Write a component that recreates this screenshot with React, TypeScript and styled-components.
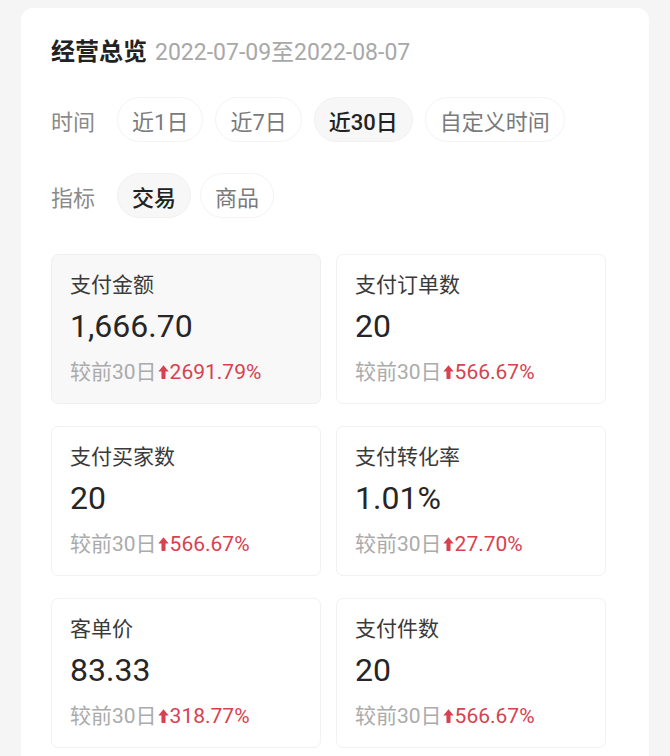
import React from "react";
import styled, { createGlobalStyle } from "styled-components";

const Global = createGlobalStyle`
  html, body { margin: 0; padding: 0; background: #f5f5f5; }
  body { font-family: Roboto, "Noto Sans CJK SC", "Noto Sans", sans-serif; }
  * { box-sizing: border-box; }
`;

const Page = styled.div`
  padding: 8px 21px 0 21px;
`;

const Panel = styled.div`
  background: #ffffff;
  border-radius: 12px;
  padding: 28px 30px 30px 30px;
`;

const TitleRow = styled.div`
  display: flex;
  align-items: baseline;
  height: 32px;
  line-height: 32px;
`;

const Title = styled.span`
  font-size: 24px;
  font-weight: 700;
  color: #222;
`;

const DateRange = styled.span`
  font-size: 23px;
  color: #a8a8a8;
  margin-left: 8px;
`;

const FilterRow = styled.div<{ $top: number; $gap: number }>`
  display: flex;
  align-items: center;
  margin-top: ${(p) => p.$top}px;
  gap: ${(p) => p.$gap}px;
`;

const FilterLabel = styled.span<{ $space: number }>`
  font-size: 22px;
  color: #8a8a8a;
  margin-right: ${(p) => p.$space}px;
  white-space: nowrap;
`;

const Chip = styled.div<{ $active?: boolean }>`
  height: 45px;
  padding: 0 14px;
  border-radius: 23px;
  display: flex;
  align-items: center;
  font-size: 22px;
  white-space: nowrap;
  color: ${(p) => (p.$active ? "#222" : "#7a7a7a")};
  font-weight: ${(p) => (p.$active ? 500 : 400)};
  background: ${(p) => (p.$active ? "#f7f7f7" : "#ffffff")};
  border: 1px solid ${(p) => (p.$active ? "#f1f1f1" : "#f3f3f3")};
`;

const Grid = styled.div`
  margin-top: 36px;
  display: grid;
  grid-template-columns: 270px 270px;
  column-gap: 15px;
  row-gap: 22px;
`;

const MetricCard = styled.div<{ $active?: boolean }>`
  height: 150px;
  border-radius: 7px;
  padding: 16px 18px 0 18px;
  background: ${(p) => (p.$active ? "#f8f8f8" : "#ffffff")};
  border: 1px solid ${(p) => (p.$active ? "#efefef" : "#f2f2f2")};
  display: flex;
  flex-direction: column;
`;

const MetricName = styled.div`
  font-size: 21px;
  line-height: 28px;
  color: #3a3a3a;
`;

const MetricValue = styled.div`
  font-size: 32px;
  line-height: 40px;
  margin-top: 7px;
  color: #262626;
`;

const Compare = styled.div`
  margin-top: 12px;
  font-size: 21px;
  line-height: 28px;
  color: #ababab;
  display: flex;
  align-items: center;
  white-space: nowrap;
`;

const Rise = styled.span`
  color: #d8414f;
  display: inline-flex;
  align-items: center;
`;

const ArrowIcon = styled.svg`
  width: 11px;
  height: 14px;
  margin: 0 1px 0 1px;
  flex-shrink: 0;
`;

const UpArrow = () => (
  <ArrowIcon viewBox="0 0 10 13">
    <path d="M5 0.3 L9.8 6 L6.9 6 L6.9 12.3 Q6.9 13 6.2 13 L3.8 13 Q3.1 13 3.1 12.3 L3.1 6 L0.2 6 Z" fill="#d8414f" />
  </ArrowIcon>
);

const metrics = [
  { name: "支付金额", value: "1,666.70", rise: "2691.79%", active: true },
  { name: "支付订单数", value: "20", rise: "566.67%" },
  { name: "支付买家数", value: "20", rise: "566.67%" },
  { name: "支付转化率", value: "1.01%", rise: "27.70%" },
  { name: "客单价", value: "83.33", rise: "318.77%" },
  { name: "支付件数", value: "20", rise: "566.67%" },
];

export default function App() {
  return (
    <>
      <Global />
      <Page>
        <Panel>
          <TitleRow>
            <Title>经营总览</Title>
            <DateRange>2022-07-09至2022-08-07</DateRange>
          </TitleRow>
          <FilterRow $top={29} $gap={12}>
            <FilterLabel $space={10}>时间</FilterLabel>
            <Chip>近1日</Chip>
            <Chip>近7日</Chip>
            <Chip $active>近30日</Chip>
            <Chip>自定义时间</Chip>
          </FilterRow>
          <FilterRow $top={31} $gap={9}>
            <FilterLabel $space={13}>指标</FilterLabel>
            <Chip $active>交易</Chip>
            <Chip>商品</Chip>
          </FilterRow>
          <Grid>
            {metrics.map((m) => (
              <MetricCard key={m.name} $active={m.active}>
                <MetricName>{m.name}</MetricName>
                <MetricValue>{m.value}</MetricValue>
                <Compare>
                  较前30日
                  <Rise>
                    <UpArrow />
                    {m.rise}
                  </Rise>
                </Compare>
              </MetricCard>
            ))}
          </Grid>
        </Panel>
      </Page>
    </>
  );
}
